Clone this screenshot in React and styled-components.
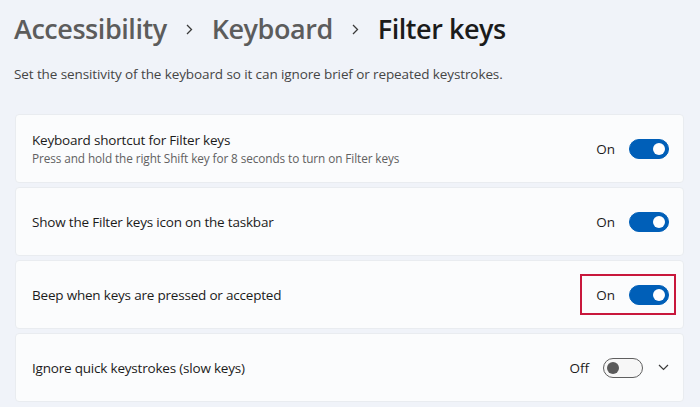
import React from 'react';
import styled, { createGlobalStyle } from 'styled-components';

const GlobalStyle = createGlobalStyle`
  html, body {
    margin: 0;
    padding: 0;
    background: #f0f3f9;
  }
  body {
    font-family: "Open Sans", "Noto Sans", sans-serif;
    color: #1b1b1b;
  }
`;

const Page = styled.div`
  width: 700px;
  height: 407px;
  overflow: hidden;
  box-sizing: border-box;
  padding: 8px 16px 0 15px;
`;

const Breadcrumb = styled.h1`
  display: flex;
  align-items: center;
  margin: 0 0 0 -1px;
  height: 40px;
  font-size: 27px;
  font-weight: 600;
  letter-spacing: -0.45px;
`;

const Crumb = styled.span`
  color: ${({ current }) => (current ? '#1b1b1b' : '#5c5c5c')};
`;

const Sep = styled.span`
  display: flex;
  align-items: center;
  margin: 2px 19px 0 19px;
`;

const Intro = styled.p`
  margin: 17px 0 0 -1px;
  font-size: 13.5px;
  color: #454545;
  letter-spacing: -0.1px;
`;

const List = styled.div`
  display: flex;
  flex-direction: column;
  gap: 4px;
  margin-top: 31px;
`;

const Card = styled.div`
  display: flex;
  align-items: center;
  height: 69px;
  box-sizing: border-box;
  padding: 0 14px 0 16px;
  background: #fbfcfd;
  border: 1px solid #e9ecf0;
  border-radius: 4px;
`;

const Texts = styled.div`
  flex: 1;
  display: flex;
  flex-direction: column;
  gap: 1px;
`;

const Title = styled.div`
  font-size: 13.5px;
  letter-spacing: -0.2px;
  color: #1b1b1b;
`;

const Sub = styled.div`
  font-size: 11.8px;
  letter-spacing: -0.1px;
  color: #616161;
`;

const Control = styled.div`
  position: relative;
  display: flex;
  align-items: center;
  gap: 14px;
`;

const State = styled.span`
  font-size: 13.5px;
  color: #1b1b1b;
`;

const Toggle = styled.div`
  position: relative;
  width: 40px;
  height: 20px;
  box-sizing: border-box;
  border-radius: 10px;
  background: ${({ on }) => (on ? '#005fb8' : '#f7f7f7')};
  border: 1px solid ${({ on }) => (on ? '#005fb8' : '#5f5f5f')};
  &::after {
    content: '';
    position: absolute;
    top: 3px;
    ${({ on }) => (on ? 'right: 3px;' : 'left: 3px;')}
    width: 12px;
    height: 12px;
    border-radius: 50%;
    background: ${({ on }) => (on ? '#ffffff' : '#5a5a5a')};
  }
`;

const Highlight = styled.div`
  position: absolute;
  top: -11px;
  bottom: -10px;
  left: -16px;
  right: -7px;
  border: 2px solid #c8173c;
  pointer-events: none;
`;

const Expand = styled.span`
  display: flex;
  align-items: center;
  margin-left: 1px;
`;

const Chevron = () => (
  <svg width="7" height="11" viewBox="0 0 7 11">
    <polyline points="1,1 5.5,5.5 1,10" fill="none" stroke="#3a3a3a" strokeWidth="1.3" />
  </svg>
);

const ChevronDown = () => (
  <svg width="11" height="7" viewBox="0 0 11 7">
    <polyline points="1,1 5.5,5.5 10,1" fill="none" stroke="#3a3a3a" strokeWidth="1.2" />
  </svg>
);

const rows = [
  {
    title: 'Keyboard shortcut for Filter keys',
    sub: 'Press and hold the right Shift key for 8 seconds to turn on Filter keys',
    on: true,
  },
  { title: 'Show the Filter keys icon on the taskbar', on: true },
  { title: 'Beep when keys are pressed or accepted', on: true, marked: true },
  { title: 'Ignore quick keystrokes (slow keys)', on: false, expand: true },
];

const App = () => (
  <>
    <GlobalStyle />
    <Page>
      <Breadcrumb>
        <Crumb>Accessibility</Crumb>
        <Sep><Chevron /></Sep>
        <Crumb>Keyboard</Crumb>
        <Sep><Chevron /></Sep>
        <Crumb current>Filter keys</Crumb>
      </Breadcrumb>
      <Intro>Set the sensitivity of the keyboard so it can ignore brief or repeated keystrokes.</Intro>
      <List>
        {rows.map((r) => (
          <Card key={r.title}>
            <Texts>
              <Title>{r.title}</Title>
              {r.sub && <Sub>{r.sub}</Sub>}
            </Texts>
            <Control>
              <State>{r.on ? 'On' : 'Off'}</State>
              <Toggle on={r.on} />
              {r.marked && <Highlight />}
              {r.expand && (
                <Expand><ChevronDown /></Expand>
              )}
            </Control>
          </Card>
        ))}
      </List>
    </Page>
  </>
);

export default App;
